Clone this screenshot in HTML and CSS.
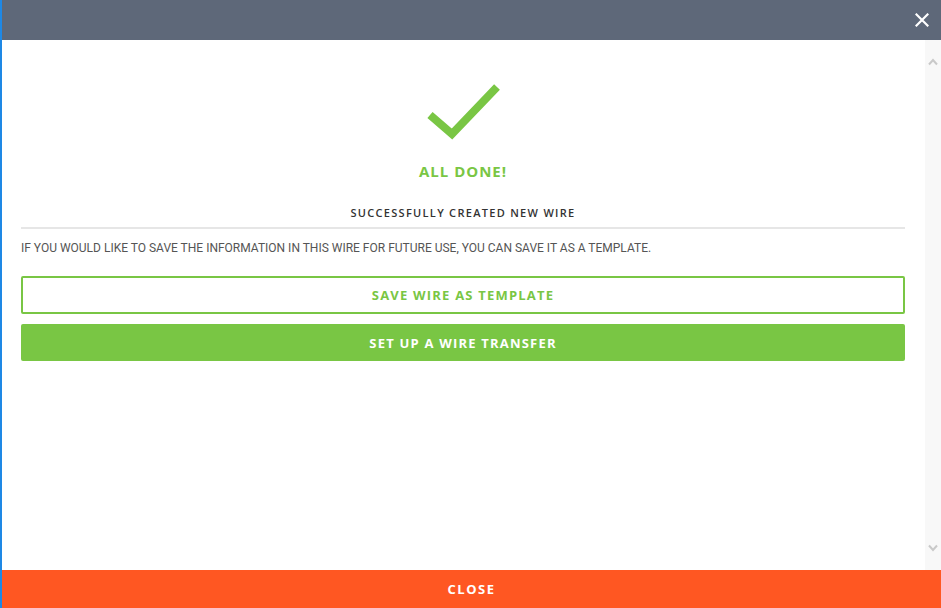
FILE: index.html
```html
<!DOCTYPE html>
<html>
<head>
<meta charset="utf-8">
<link rel="stylesheet" href="styles.css">
</head>
<body>
<div class="modal">
  <div class="header">
    <button class="x-btn" aria-label="Close">
      <svg width="14" height="14" viewBox="0 0 14 14"><path d="M1.5 1.5 L12.5 12.5 M12.5 1.5 L1.5 12.5" stroke="#fff" stroke-width="2.2" stroke-linecap="square"/></svg>
    </button>
  </div>
  <div class="main">
    <div class="content">
      <div class="check">
        <svg width="74" height="58" viewBox="0 0 74 58"><polyline points="3,33 25,52 70,5" fill="none" stroke="#79c644" stroke-width="8"/></svg>
      </div>
      <h2 class="title">ALL DONE!</h2>
      <div class="subtitle">SUCCESSFULLY CREATED NEW WIRE</div>
      <p class="info">IF YOU WOULD LIKE TO SAVE THE INFORMATION IN THIS WIRE FOR FUTURE USE, YOU CAN SAVE IT AS A TEMPLATE.</p>
      <button class="btn btn-outline">SAVE WIRE AS TEMPLATE</button>
      <button class="btn btn-fill">SET UP A WIRE TRANSFER</button>
    </div>
    <div class="scrollbar">
      <svg width="10" height="8" viewBox="0 0 10 8"><polyline points="1,6.5 5,2 9,6.5" fill="none" stroke="#c9c9c9" stroke-width="2"/></svg>
      <svg width="10" height="8" viewBox="0 0 10 8"><polyline points="1,1.5 5,6 9,1.5" fill="none" stroke="#c9c9c9" stroke-width="2"/></svg>
    </div>
  </div>
  <button class="footer">CLOSE</button>
</div>
</body>
</html>
```

FILE: styles.css
```css
* { box-sizing: border-box; }
html, body { margin: 0; padding: 0; background: #fff; }
.modal {
  width: 941px;
  height: 608px;
  display: flex;
  flex-direction: column;
  border-left: 2px solid #1e88e5;
  overflow: hidden;
}
.header {
  height: 40px;
  background: #5e6879;
  display: flex;
  justify-content: flex-end;
  align-items: center;
  padding-right: 12px;
  flex-shrink: 0;
}
.x-btn {
  background: none;
  border: 0;
  padding: 0;
  width: 14px;
  height: 14px;
  display: flex;
}
.main {
  flex: 1;
  display: flex;
  min-height: 0;
}
.content {
  flex: 1;
  padding: 0 20px 0 19px;
  display: flex;
  flex-direction: column;
  align-items: stretch;
}
.check {
  display: flex;
  justify-content: center;
  padding-top: 42px;
  height: 100px;
}
.check svg { margin-left: 2px; }
.title {
  margin: 20px 0 0;
  text-align: center;
  font-family: "Open Sans", sans-serif;
  font-weight: 700;
  font-size: 15px;
  letter-spacing: 1px;
  color: #79c644;
  line-height: 22px;
}
.subtitle {
  margin-top: 23px;
  text-align: center;
  font-family: "Open Sans", sans-serif;
  font-weight: 600;
  font-size: 11px;
  letter-spacing: 1.3px;
  color: #333;
  line-height: 16px;
  padding-bottom: 6px;
  border-bottom: 2px solid #e6e6e6;
}
.info {
  margin: 12px 0 0;
  font-family: Roboto, sans-serif;
  font-size: 12px;
  color: #555;
  line-height: 14px;
}
.btn {
  display: block;
  width: 100%;
  font-family: "Open Sans", sans-serif;
  font-weight: 700;
  font-size: 13px;
  letter-spacing: 1.2px;
  border-radius: 2px;
  cursor: pointer;
}
.btn-outline {
  margin-top: 21px;
  height: 38px;
  border: 2px solid #79c644;
  background: #fff;
  color: #79c644;
}
.btn-fill {
  margin-top: 10px;
  height: 37px;
  border: 0;
  background: #79c644;
  color: #fff;
}
.scrollbar {
  width: 16px;
  background: #f8f8f8;
  display: flex;
  flex-direction: column;
  justify-content: space-between;
  align-items: center;
  padding: 18px 0 18px;
}
.footer {
  height: 38px;
  flex-shrink: 0;
  background: #ff5722;
  border: 0;
  color: #fff;
  font-family: "Open Sans", sans-serif;
  font-weight: 700;
  font-size: 13px;
  letter-spacing: 1.5px;
  width: 100%;
  padding: 0;
}
```
